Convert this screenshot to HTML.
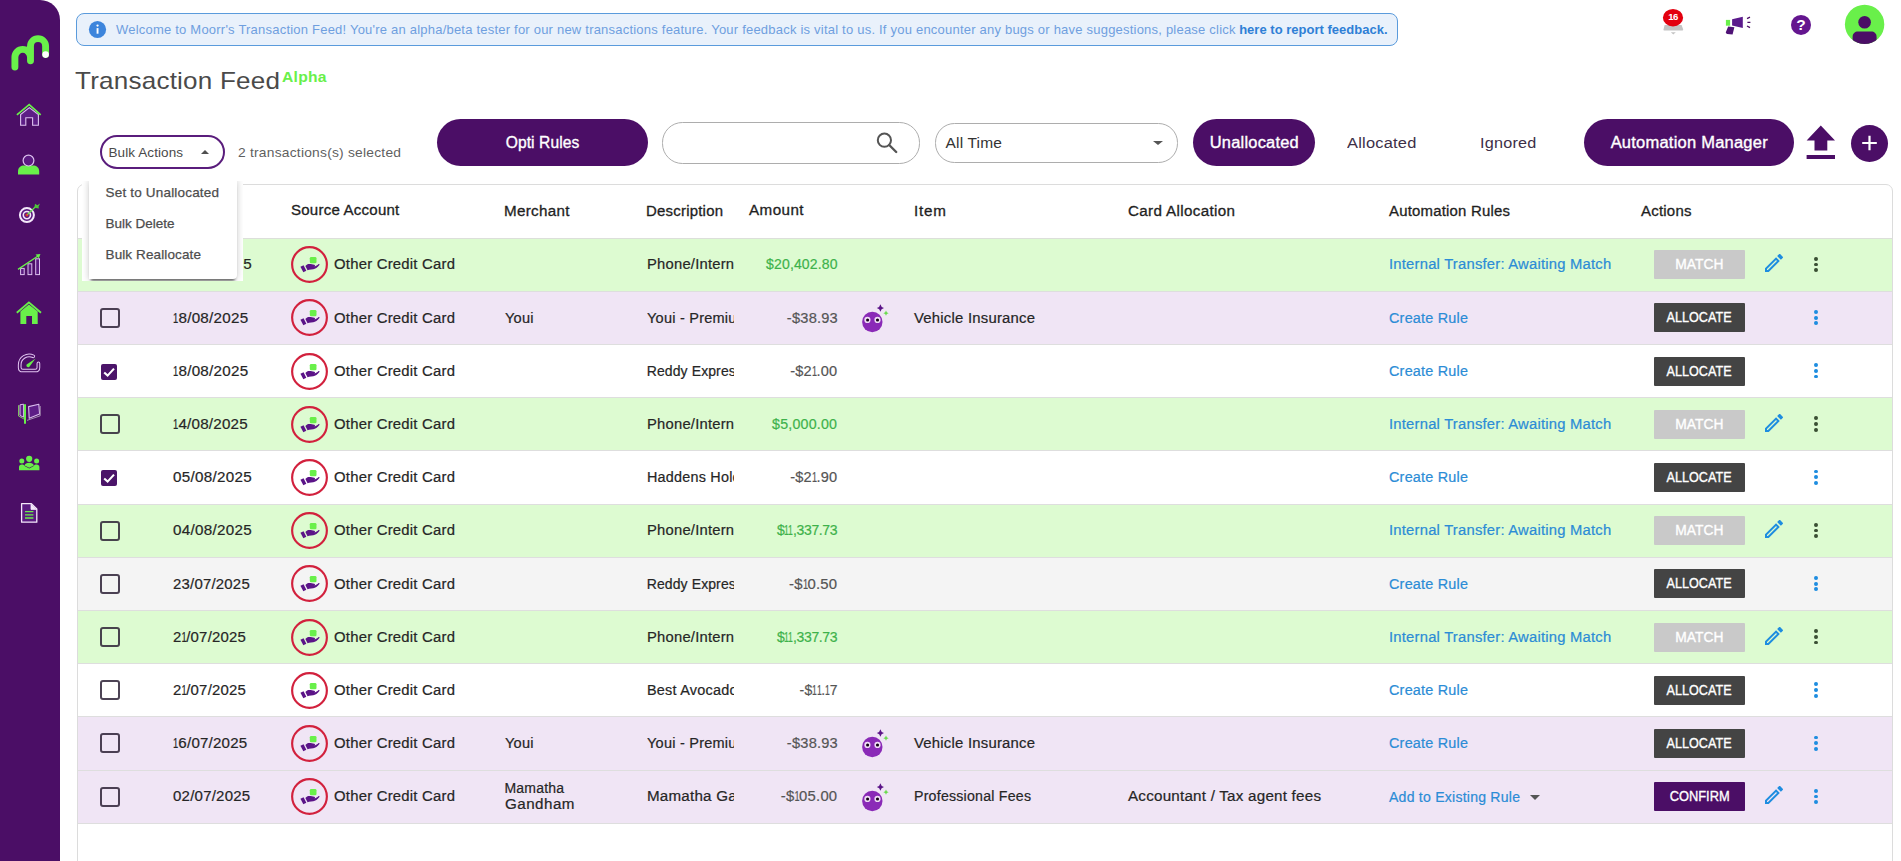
<!DOCTYPE html>
<html lang="en"><head>
<meta charset="utf-8">
<title>Transaction Feed</title>
<style>
*{box-sizing:border-box;margin:0;padding:0}
html,body{width:1901px;height:861px;overflow:hidden;background:#fff}
body{font-family:"Liberation Sans",sans-serif;color:#222;position:relative;font-size:14px}
.abs{position:absolute}
.fit{white-space:nowrap;display:inline-block}
/* sidebar */
#side{position:absolute;left:0;top:0;width:60px;height:861px;background:#4b0e66;border-top-right-radius:20px}
#side svg{position:absolute;left:0;top:0}
/* banner */
#banner{position:absolute;left:76px;top:13px;width:1322px;height:32.5px;border:1px solid #5a9bdc;border-radius:8px;background:#e9f1fb}
#banner .txt{position:absolute;left:39px;top:-0.4px;line-height:31px;font-size:13px;color:#6f9fdf;white-space:nowrap}
#banner .txt b{color:#2f7fd6;font-weight:700}
#title{position:absolute;left:75px;top:62.6px;font-size:24px;line-height:36px;color:#4a4a4a;white-space:nowrap}
#alpha{position:absolute;left:282px;top:66.7px;font-size:14.5px;line-height:20px;font-weight:700;color:#69f04a;white-space:nowrap}
/* toolbar */
#bulk{position:absolute;left:100px;top:134.5px;width:125px;height:34.5px;border:2px solid #5a1d7c;border-radius:17px;background:#fff}
#bulk .t{position:absolute;left:6.5px;top:0;line-height:31px;font-size:13.5px;color:#4a4a4a}
#bulk .a{position:absolute;left:99.3px;top:13.6px;width:0;height:0;border-left:4.8px solid transparent;border-right:4.8px solid transparent;border-bottom:4.6px solid #4f4f4f}
#selinfo{position:absolute;left:237.5px;top:142.5px;line-height:20px;font-size:13.5px;color:#5f5f5f}
.pill{position:absolute;top:118.5px;height:47.7px;border-radius:24px;background:#4b0e66;color:#fff;font-size:15.6px;text-align:center;line-height:48.2px;-webkit-text-stroke:0.35px #fff}
#search{position:absolute;left:662px;top:122.3px;width:257.7px;height:41.4px;border:1px solid #adadad;border-radius:20.4px;background:#fff}
#alltime{position:absolute;left:934.5px;top:123.2px;width:243.7px;height:39.5px;border:1px solid #adadad;border-radius:19.5px;background:#fff}
#alltime .t{position:absolute;left:10px;top:-0.6px;line-height:37px;font-size:15.5px;color:#333}
#alltime .a{position:absolute;left:217px;top:17.2px;width:0;height:0;border-left:5.1px solid transparent;border-right:5.1px solid transparent;border-top:4.9px solid #555}
.tab{position:absolute;top:132px;line-height:22px;font-size:15.5px;color:#3d2f48}
#plus{position:absolute;left:1851px;top:124.7px;width:37px;height:37px;border-radius:50%;background:#4b0e66}
/* table */
#tbl{position:absolute;left:77px;top:184px;width:1815.5px;height:700px;border:1px solid #dcdcdc;border-radius:7px 7px 0 0;background:#fff}
.th{position:absolute;font-size:14px;line-height:20px;color:#1f1f1f;-webkit-text-stroke:0.3px #1f1f1f;white-space:nowrap}
#hline{position:absolute;left:78px;top:238px;width:1814px;height:1px;background:#dcdfda}
.row{position:absolute;left:78px;width:1814px;height:53.2px;border-bottom:1.2px solid #dedede}
.bg-g{background:#ddfbd1}.bg-p{background:#f0e5f5}.bg-w{background:#fff}.bg-y{background:#f4f4f4}
.c{position:absolute;top:14.9px;-webkit-text-stroke:0.2px currentColor;line-height:22px;font-size:14px;color:#262626;white-space:nowrap}
.cb{position:absolute;left:22.4px;top:16.1px;width:20px;height:20px;border:2.2px solid rgba(38,26,48,.82);border-radius:3px}
.cb.on{left:23px;top:18.7px;width:16.2px;height:16.2px;border:0;background:#4b1469;border-radius:2px}
.cb.on svg{position:absolute;left:0;top:0}
.date{left:94.8px}
.o{font-style:normal;display:inline-block;width:4.7px;transform:scaleX(.62);transform-origin:0 50%;margin-left:-0.3px}.o.f{margin-left:0.3px}
.acct{position:absolute;left:213.2px;top:7.7px;width:37px;height:37px}
.acctname{left:256px}
.merch{left:426.5px}
.merch.two{top:9.5px;line-height:16px}
.desc{left:568.7px;width:87.7px;overflow:hidden}
.amt{right:1054.5px;color:#555}
.amt.pos{color:#3db24b}
.bot{position:absolute;left:782.1px;top:8px;width:34px;height:34px}
.item{left:836px}
.card{left:1049.5px}
.rule{left:1310.5px;color:#2b8cd6}
.caret{position:absolute;left:1451.9px;top:24.4px;width:0;height:0;border-left:5.3px solid transparent;border-right:5.3px solid transparent;border-top:5.3px solid #555}
.btn{position:absolute;left:1576px;top:11.5px;width:91px;height:29.2px;text-align:center;line-height:29.4px;font-size:14px;color:#fff;-webkit-text-stroke:0.35px #fff;border-radius:1px}
.b-match{background:#c9c9c9}.b-alloc{background:#444}.b-conf{background:#4b0e66}
.pen{position:absolute;left:1684px;top:12.6px;width:24px;height:24px}
.dots{position:absolute;left:1736.1px;top:18.3px;width:4px;height:16px}
.dots i{display:block;width:3.8px;height:3.8px;border-radius:50%;background:#1e8de0;margin:0 0 1.85px 0}
.dots.dk i{background:#3a4f33}
/* dropdown */
#ddu{position:absolute;left:82px;top:181px;width:161px;height:99.8px;background:#fff;overflow:hidden}
#dd{position:absolute;left:6.5px;top:0;width:148px;height:97.5px;background:#fff;border-radius:0 0 4px 0;box-shadow:0 4px 3px -2px rgba(0,0,0,.55),0 0 6px 1px rgba(0,0,0,.17)}
#dd span{position:absolute;left:17px;font-size:13.5px;line-height:20px;color:#4d4d4d;-webkit-text-stroke:0.25px #4d4d4d}
</style>
</head>
<body>

<div id="side">
<svg width="60" height="861" viewBox="0 0 60 861">
  <!-- logo -->
  <path d="M14.9 67 V57.2 A7.8 7.8 0 0 1 30.5 57.2 V60.8 M30.5 57.2 V46.2 A7.55 7.55 0 0 1 45.6 46.2 V54.5" fill="none" stroke="#69f04a" stroke-width="6.9" stroke-linecap="round" stroke-linejoin="round"></path>
  <circle cx="45.6" cy="54.6" r="3.3" fill="#fff"></circle>

  <!-- home outline -->
  <path d="M20.6 114.6 V125.2 H25.8 V117.8 H32.6 V125.2 H38.4 V114.6 L29.3 107.6 Z" fill="#5d1e86" stroke="#dcc0ee" stroke-width="1.1" stroke-linejoin="miter"></path>
  <path d="M16.9 114.9 L29.2 104.6 L40.7 114.9" fill="none" stroke="#69f04a" stroke-width="1.7"></path>
  <!-- person -->
  <path d="M18 174.6 V171.4 C18 167.6 21 165.6 24 165.6 H33.2 C36.2 165.6 39.2 167.6 39.2 171.4 V174.6 Z" fill="#69f04a"></path>
  <circle cx="28.5" cy="160.6" r="5.4" fill="#5a1a80" stroke="#dcc0ee" stroke-width="1.2"></circle>
  <!-- target -->
  <circle cx="26.9" cy="215.1" r="7" fill="#5a1a80" stroke="#f4e8fa" stroke-width="2"></circle>
  <circle cx="26.9" cy="215.1" r="3.6" fill="#5a1a80" stroke="#f4e8fa" stroke-width="1.6"></circle>
  <circle cx="26.9" cy="215.1" r="1.5" fill="#e5352b"></circle>
  <path d="M27.4 214.6 L36.6 205.6" stroke="#69f04a" stroke-width="1.3" fill="none"></path>
  <path d="M34.4 207.8 L35 203.8 L37.4 205.2 L40 203.6 L38.6 206.4 L38.8 208.4 Z" fill="#4fc43a"></path>
  <!-- bars -->
  <rect x="20.6" y="268.4" width="3.6" height="6.2" fill="#5a1a80" stroke="#dcc0ee" stroke-width="1"></rect>
  <rect x="28" y="263.8" width="3.8" height="10.8" fill="#5a1a80" stroke="#dcc0ee" stroke-width="1"></rect>
  <rect x="35.7" y="258.8" width="3.8" height="15.8" fill="#5a1a80" stroke="#dcc0ee" stroke-width="1"></rect>
  <path d="M18 269.4 L38 256" stroke="#69f04a" stroke-width="1.3" fill="none"></path>
  <path d="M35.6 254.6 L40.4 254 L38.8 258.6 Z" fill="#69f04a"></path>
  <!-- home green -->
  <path d="M20.4 311.4 L28.9 304.4 L37.7 311.4 V323.9 H32 V316 H26.3 V323.9 H20.4 Z" fill="#69f04a"></path>
  <path d="M16.8 312.7 L28.9 302.4 L41 312.7" fill="none" stroke="#69f04a" stroke-width="1.9"></path>
  <!-- gauge -->
  <path d="M33.3 356.3 A9.5 9.5 0 0 0 19.7 364.9 V367.4 Q19.7 370.5 22.8 370.5 H35.3 Q38.4 370.5 38.4 367.4 V363.4" fill="none" stroke="#e2c6f2" stroke-width="3.7" stroke-linecap="round"></path>
  <path d="M33.3 356.3 A9.5 9.5 0 0 0 19.7 364.9 V367.4 Q19.7 370.5 22.8 370.5 H35.3 Q38.4 370.5 38.4 367.4 V363.4" fill="none" stroke="#4b0e66" stroke-width="1.7" stroke-linecap="round"></path>
  <path d="M26.6 364.4 L35.6 358.4 L29.2 366.9 C28 368.2 25.6 366 26.6 364.4 Z" fill="#69f04a"></path>
  <!-- book -->
  <path d="M18.5 405.2 V416 L24 419" fill="none" stroke="#7fc060" stroke-width="1"></path>
  <path d="M20 404.8 L23.6 404.2 V417.2 L20 415.4 Z" fill="#5d1e86" stroke="#d9bcec" stroke-width="1"></path>
  <path d="M28.6 406.6 L38.8 404.2 L39.6 414 L29.2 418.2 Z" fill="#5d1e86" stroke="#d9bcec" stroke-width="1.1" stroke-linejoin="round"></path>
  <path d="M27 420.4 L40.2 415.8 V406" fill="none" stroke="#a48fb0" stroke-width="1"></path>
  <path d="M25 404.2 V423.8" stroke="#69f04a" stroke-width="2" fill="none"></path>
  <!-- group -->
  <circle cx="29.2" cy="458.8" r="3.1" fill="#69f04a"></circle><circle cx="21.8" cy="461" r="2.5" fill="#69f04a"></circle><circle cx="36.6" cy="461" r="2.5" fill="#69f04a"></circle>
  <path d="M19 470.2 V467 C19 465.2 20.2 464.4 21.8 464.4 C23.4 464.4 24.4 465 25 466.2 L29.2 468.6 L33.4 466.2 C34 465 35 464.4 36.6 464.4 C38.2 464.4 39.4 465.2 39.4 467 V470.2 Z" fill="#69f04a"></path>
  <path d="M24.6 465.4 C25 463.6 26.8 462.8 29.2 462.8 C31.6 462.8 33.4 463.6 33.8 465.4 L29.2 467.8 Z" fill="#69f04a"></path>
  <!-- doc -->
  <path d="M21.6 503.6 H31.4 L36.8 509 V522.2 H21.6 Z" fill="#5a1a80" stroke="#f4e8fa" stroke-width="1.3" stroke-linejoin="round"></path>
  <path d="M31 503.8 V509.4 H36.6" fill="#f4e8fa" stroke="#f4e8fa" stroke-width="0.8"></path>
  <path d="M25 511.6 H33.4 M25 514.8 H33.4 M25 518 H33.4" stroke="#69f04a" stroke-width="1.3" fill="none"></path>
</svg>
</div>

<div id="banner">
  <svg class="abs" style="left:10.5px;top:5.8px" width="19" height="19" viewBox="0 0 19 19"><circle cx="9.5" cy="9.5" r="8.6" fill="#3d85dc"></circle><rect x="8.6" y="8.1" width="1.9" height="5.6" fill="#fff"></rect><circle cx="9.55" cy="5.6" r="1.15" fill="#fff"></circle></svg>
  <span class="txt"><span class="fit" style="letter-spacing: 0.215px; margin-right: -0.215px;">Welcome to Moorr's Transaction Feed! You're an alpha/beta tester for our new transactions feature. Your feedback is vital to us. If you encounter any bugs or have suggestions, please click</span> <b class="fit" style="letter-spacing: 0.017px; margin-right: -0.017px;">here to report feedback.</b></span>
</div>

<div id="title"><span class="fit" style="letter-spacing: 0.204px; transform: scaleX(1.085); transform-origin: left center; margin-right: 15.856px;">Transaction Feed</span></div>
<div id="alpha"><span class="fit" style="letter-spacing: 0.203px; transform: scaleX(1.0829); transform-origin: left center; margin-right: 3.203px;">Alpha</span></div>

<div id="bulk"><span class="t fit" style="letter-spacing: 0.087px; margin-right: -0.087px;">Bulk Actions</span><span class="a"></span></div>
<div id="selinfo"><span class="fit" style="letter-spacing: 0.215px; transform: scaleX(1.0239); transform-origin: left center; margin-right: 3.585px;">2 transactions(s) selected</span></div>

<div class="pill" style="left:437.2px;width:210.6px"><span class="fit" style="letter-spacing: 0.076px; margin-right: -0.076px;">Opti Rules</span></div>
<div id="search"><svg class="abs" style="left:209.2px;top:4.3px" width="30" height="30" viewBox="0 0 30 30"><circle cx="12.4" cy="12.2" r="6.6" fill="none" stroke="#555" stroke-width="2"></circle><path d="M17.2 17 L24.2 24" stroke="#555" stroke-width="2.4" stroke-linecap="round"></path></svg></div>
<div id="alltime"><span class="t fit" style="letter-spacing: 0.196px; margin-right: -0.196px;">All Time</span><span class="a"></span></div>
<div class="pill" style="left:1193.3px;width:122px"><span class="fit" style="letter-spacing: 0.209px; transform: scaleX(1.0539); transform-origin: center center; margin-right: -0.209px;">Unallocated</span></div>
<div class="tab" style="left:1347.3px"><span class="fit" style="letter-spacing: 0.208px; transform: scaleX(1.0592); transform-origin: left center; margin-right: 3.665px;">Allocated</span></div>
<div class="tab" style="left:1480.3px"><span class="fit" style="letter-spacing: 0.21px; transform: scaleX(1.0457); transform-origin: left center; margin-right: 2.249px;">Ignored</span></div>
<div class="pill" style="left:1583.8px;width:210px"><span class="fit" style="letter-spacing: 0.208px; transform: scaleX(1.0587); transform-origin: center center; margin-right: -0.208px;">Automation Manager</span></div>
<svg class="abs" style="left:1804px;top:122px" width="34" height="40" viewBox="0 0 34 40"><path d="M16.8 3.4 L31 18.6 H23.3 V28.4 H10.5 V18.6 H2.6 Z" fill="#4b0e66"></path><rect x="2.6" y="33" width="28.4" height="4" fill="#4b0e66"></rect></svg>
<div id="plus"><svg width="37" height="37" viewBox="0 0 37 37"><path d="M18.5 10.7 V25.3 M11.2 18 H25.8" stroke="#fff" stroke-width="2.2"></path></svg></div>

<div id="tbl"></div>
<span class="th fit" style="left: 291px; top: 199.5px; letter-spacing: 0.205px; transform: scaleX(1.0752); transform-origin: left center; margin-right: 7.373px;">Source Account</span>
<span class="th fit" style="left: 504.3px; top: 200.5px; letter-spacing: 0.287px; transform: scaleX(1.085); transform-origin: left center; margin-right: 4.844px;">Merchant</span>
<span class="th fit" style="left: 646.3px; top: 200.5px; letter-spacing: 0.206px; transform: scaleX(1.0681); transform-origin: left center; margin-right: 4.703px;">Description</span>
<span class="th fit" style="left: 748.5px; top: 199.5px; letter-spacing: 0.396px; transform: scaleX(1.085); transform-origin: left center; margin-right: 3.874px;">Amount</span>
<span class="th fit" style="left: 914px; top: 200.5px; letter-spacing: 0.753px; transform: scaleX(1.085); transform-origin: left center; margin-right: 1.754px;">Item</span>
<span class="th fit" style="left: 1127.5px; top: 200.5px; letter-spacing: 0.318px; transform: scaleX(1.085); transform-origin: left center; margin-right: 8.065px;">Card Allocation</span>
<span class="th fit" style="left: 1388.8px; top: 200.5px; letter-spacing: 0.207px; transform: scaleX(1.065); transform-origin: left center; margin-right: 7.179px;">Automation Rules</span>
<span class="th fit" style="left: 1640.5px; top: 200.5px; letter-spacing: 0.205px; transform: scaleX(1.0709); transform-origin: left center; margin-right: 3.14px;">Actions</span>
<div id="hline"></div>
<div class="row bg-g" style="top:238.6px"><span class="cb"></span><span class="c date fit" style="letter-spacing: 0.283px; transform: scaleX(1.085); transform-origin: left center; margin-right: 5.89px;">20/08/2025</span><span class="acct"><svg width="37" height="37" viewBox="0 0 36 36"><circle cx="18" cy="18" r="16.9" fill="none" stroke="#d2213d" stroke-width="2.1"></circle>
  <rect x="18.3" y="10.6" width="6.5" height="6.3" rx="1.4" fill="#69f04a"></rect>
  <path d="M9.2 20.1 L12.2 18.7 L14.9 24 L12 25.6 Z" fill="#5b1488"></path>
  <path d="M14 19.4 C15.2 17.6 17.3 17.1 19.2 17.6 L22.6 18.2 C23.7 18.4 23.6 19.7 22.6 19.8 L23.6 19.7 C24.8 19.4 26 18.4 26.8 17.6 C27.6 17.2 28.1 18 27.4 18.8 C25.8 20.9 23.8 22.3 21.6 22.7 L17.6 23 L16.1 23.7 Z" fill="#5b1488"></path></svg></span><span class="fit c acctname" style="letter-spacing: 0.207px; transform: scaleX(1.0633); transform-origin: left center; margin-right: 6.998px;">Other Credit Card</span><span class="c desc"><span class="fit" style="letter-spacing: 0.208px; transform: scaleX(1.056); transform-origin: left center; margin-right: -0.208px;">Phone/Internet</span></span><span class="c amt pos"><span class="fit" style="letter-spacing: 0.147px; margin-right: -0.147px;">$20,402.80</span></span><span class="fit c rule" style="letter-spacing: 0.208px; transform: scaleX(1.0566); transform-origin: left center; margin-right: 11.704px;">Internal Transfer: Awaiting Match</span><span class="btn b-match"><span class="fit" style="transform: scaleX(0.9849);">MATCH</span></span><span class="pen"><svg width="24" height="24" viewBox="0 0 24 24"><path d="M14.06 9.02l.92.92L5.92 19H5v-.92l9.06-9.06M17.66 3c-.25 0-.51.1-.7.29l-1.83 1.83 3.75 3.75 1.83-1.83c.39-.39.39-1.02 0-1.41l-2.34-2.34c-.2-.2-.45-.29-.71-.29zm-3.6 3.19L3 17.25V21h3.75L17.81 9.94l-3.75-3.75z" fill="#1e8de0"></path></svg></span><span class="dots dk"><i></i><i></i><i></i></span></div>
<div class="row bg-p" style="top:291.8px"><span class="cb"></span><span class="c date fit" style="letter-spacing: 0.253px; transform: scaleX(1.085); transform-origin: left center; margin-right: 5.638px;"><i class="o f">1</i>8/08/2025</span><span class="acct"><svg width="37" height="37" viewBox="0 0 36 36"><circle cx="18" cy="18" r="16.9" fill="none" stroke="#d2213d" stroke-width="2.1"></circle>
  <rect x="18.3" y="10.6" width="6.5" height="6.3" rx="1.4" fill="#69f04a"></rect>
  <path d="M9.2 20.1 L12.2 18.7 L14.9 24 L12 25.6 Z" fill="#5b1488"></path>
  <path d="M14 19.4 C15.2 17.6 17.3 17.1 19.2 17.6 L22.6 18.2 C23.7 18.4 23.6 19.7 22.6 19.8 L23.6 19.7 C24.8 19.4 26 18.4 26.8 17.6 C27.6 17.2 28.1 18 27.4 18.8 C25.8 20.9 23.8 22.3 21.6 22.7 L17.6 23 L16.1 23.7 Z" fill="#5b1488"></path></svg></span><span class="fit c acctname" style="letter-spacing: 0.207px; transform: scaleX(1.0633); transform-origin: left center; margin-right: 6.998px;">Other Credit Card</span><span class="fit c merch" style="letter-spacing: 0.211px; transform: scaleX(1.0407); transform-origin: left center; margin-right: 0.904px;">Youi</span><span class="c desc"><span class="fit" style="letter-spacing: 0.212px; transform: scaleX(1.0384); transform-origin: left center; margin-right: -0.212px;">Youi - Premium</span></span><span class="c amt"><span class="fit" style="letter-spacing: 0.211px; transform: scaleX(1.0441); transform-origin: right center; margin-right: -0.211px;">-$38.93</span></span><span class="bot"><svg width="34" height="34" viewBox="0 0 34 34"><circle cx="12.3" cy="22" r="10.2" fill="#8a2ab7"></circle>
  <circle cx="7.4" cy="19.9" r="3.1" fill="#f0dcf6"></circle><circle cx="17.5" cy="19.9" r="3.1" fill="#f0dcf6"></circle>
  <circle cx="7.6" cy="20" r="1.55" fill="#120616"></circle><circle cx="17.5" cy="20" r="1.55" fill="#120616"></circle>
  <path d="M20.4 4.3 Q21 7.4 24 8 Q21 8.6 20.4 11.7 Q19.8 8.6 16.8 8 Q19.8 7.4 20.4 4.3Z" fill="#5b1488"></path>
  <path d="M26 10.6 Q26.4 12.8 28.6 13.2 Q26.4 13.6 26 15.8 Q25.6 13.6 23.4 13.2 Q25.6 12.8 26 10.6Z" fill="#6bdc4f"></path></svg></span><span class="fit c item" style="letter-spacing: 0.207px; transform: scaleX(1.0629); transform-origin: left center; margin-right: 6.95px;">Vehicle Insurance</span><span class="fit c rule" style="letter-spacing: 0.214px; transform: scaleX(1.0281); transform-origin: left center; margin-right: 1.943px;">Create Rule</span><span class="btn b-alloc"><span class="fit" style="transform: scaleX(0.9014);">ALLOCATE</span></span><span class="dots"><i></i><i></i><i></i></span></div>
<div class="row bg-w" style="top:345.0px"><span class="cb on"><svg viewBox="0 0 16 16" width="16" height="16"><path d="M3.2 8.4 L6.6 11.6 L13 4.6" fill="none" stroke="#fff" stroke-width="2.1"></path></svg></span><span class="c date fit" style="letter-spacing: 0.253px; transform: scaleX(1.085); transform-origin: left center; margin-right: 5.638px;"><i class="o f">1</i>8/08/2025</span><span class="acct"><svg width="37" height="37" viewBox="0 0 36 36"><circle cx="18" cy="18" r="16.9" fill="none" stroke="#d2213d" stroke-width="2.1"></circle>
  <rect x="18.3" y="10.6" width="6.5" height="6.3" rx="1.4" fill="#69f04a"></rect>
  <path d="M9.2 20.1 L12.2 18.7 L14.9 24 L12 25.6 Z" fill="#5b1488"></path>
  <path d="M14 19.4 C15.2 17.6 17.3 17.1 19.2 17.6 L22.6 18.2 C23.7 18.4 23.6 19.7 22.6 19.8 L23.6 19.7 C24.8 19.4 26 18.4 26.8 17.6 C27.6 17.2 28.1 18 27.4 18.8 C25.8 20.9 23.8 22.3 21.6 22.7 L17.6 23 L16.1 23.7 Z" fill="#5b1488"></path></svg></span><span class="fit c acctname" style="letter-spacing: 0.207px; transform: scaleX(1.0633); transform-origin: left center; margin-right: 6.998px;">Other Credit Card</span><span class="c desc"><span class="fit" style="letter-spacing: 0.106px; margin-right: -0.106px;">Reddy Express</span></span><span class="c amt"><span class="fit" style="letter-spacing: 0.211px; transform: scaleX(1.041); transform-origin: right center; margin-right: -0.211px;">-$2<i class="o">1</i>.00</span></span><span class="fit c rule" style="letter-spacing: 0.214px; transform: scaleX(1.0281); transform-origin: left center; margin-right: 1.943px;">Create Rule</span><span class="btn b-alloc"><span class="fit" style="transform: scaleX(0.9014);">ALLOCATE</span></span><span class="dots"><i></i><i></i><i></i></span></div>
<div class="row bg-g" style="top:398.2px"><span class="cb"></span><span class="c date fit" style="letter-spacing: 0.203px; transform: scaleX(1.0841); transform-origin: left center; margin-right: 5.592px;"><i class="o f">1</i>4/08/2025</span><span class="acct"><svg width="37" height="37" viewBox="0 0 36 36"><circle cx="18" cy="18" r="16.9" fill="none" stroke="#d2213d" stroke-width="2.1"></circle>
  <rect x="18.3" y="10.6" width="6.5" height="6.3" rx="1.4" fill="#69f04a"></rect>
  <path d="M9.2 20.1 L12.2 18.7 L14.9 24 L12 25.6 Z" fill="#5b1488"></path>
  <path d="M14 19.4 C15.2 17.6 17.3 17.1 19.2 17.6 L22.6 18.2 C23.7 18.4 23.6 19.7 22.6 19.8 L23.6 19.7 C24.8 19.4 26 18.4 26.8 17.6 C27.6 17.2 28.1 18 27.4 18.8 C25.8 20.9 23.8 22.3 21.6 22.7 L17.6 23 L16.1 23.7 Z" fill="#5b1488"></path></svg></span><span class="fit c acctname" style="letter-spacing: 0.207px; transform: scaleX(1.0633); transform-origin: left center; margin-right: 6.998px;">Other Credit Card</span><span class="c desc"><span class="fit" style="letter-spacing: 0.208px; transform: scaleX(1.056); transform-origin: left center; margin-right: -0.208px;">Phone/Internet</span></span><span class="c amt pos"><span class="fit" style="letter-spacing: 0.217px; transform: scaleX(1.0151); transform-origin: right center; margin-right: -0.217px;">$5,000.00</span></span><span class="fit c rule" style="letter-spacing: 0.208px; transform: scaleX(1.0566); transform-origin: left center; margin-right: 11.704px;">Internal Transfer: Awaiting Match</span><span class="btn b-match"><span class="fit" style="transform: scaleX(0.9849);">MATCH</span></span><span class="pen"><svg width="24" height="24" viewBox="0 0 24 24"><path d="M14.06 9.02l.92.92L5.92 19H5v-.92l9.06-9.06M17.66 3c-.25 0-.51.1-.7.29l-1.83 1.83 3.75 3.75 1.83-1.83c.39-.39.39-1.02 0-1.41l-2.34-2.34c-.2-.2-.45-.29-.71-.29zm-3.6 3.19L3 17.25V21h3.75L17.81 9.94l-3.75-3.75z" fill="#1e8de0"></path></svg></span><span class="dots dk"><i></i><i></i><i></i></span></div>
<div class="row bg-w" style="top:451.4px"><span class="cb on"><svg viewBox="0 0 16 16" width="16" height="16"><path d="M3.2 8.4 L6.6 11.6 L13 4.6" fill="none" stroke="#fff" stroke-width="2.1"></path></svg></span><span class="c date fit" style="letter-spacing: 0.283px; transform: scaleX(1.085); transform-origin: left center; margin-right: 5.89px;">05/08/2025</span><span class="acct"><svg width="37" height="37" viewBox="0 0 36 36"><circle cx="18" cy="18" r="16.9" fill="none" stroke="#d2213d" stroke-width="2.1"></circle>
  <rect x="18.3" y="10.6" width="6.5" height="6.3" rx="1.4" fill="#69f04a"></rect>
  <path d="M9.2 20.1 L12.2 18.7 L14.9 24 L12 25.6 Z" fill="#5b1488"></path>
  <path d="M14 19.4 C15.2 17.6 17.3 17.1 19.2 17.6 L22.6 18.2 C23.7 18.4 23.6 19.7 22.6 19.8 L23.6 19.7 C24.8 19.4 26 18.4 26.8 17.6 C27.6 17.2 28.1 18 27.4 18.8 C25.8 20.9 23.8 22.3 21.6 22.7 L17.6 23 L16.1 23.7 Z" fill="#5b1488"></path></svg></span><span class="fit c acctname" style="letter-spacing: 0.207px; transform: scaleX(1.0633); transform-origin: left center; margin-right: 6.998px;">Other Credit Card</span><span class="c desc"><span class="fit" style="letter-spacing: 0.214px; transform: scaleX(1.0277); transform-origin: left center; margin-right: -0.214px;">Haddens Holdings</span></span><span class="c amt"><span class="fit" style="letter-spacing: 0.211px; transform: scaleX(1.041); transform-origin: right center; margin-right: -0.211px;">-$2<i class="o">1</i>.90</span></span><span class="fit c rule" style="letter-spacing: 0.214px; transform: scaleX(1.0281); transform-origin: left center; margin-right: 1.943px;">Create Rule</span><span class="btn b-alloc"><span class="fit" style="transform: scaleX(0.9014);">ALLOCATE</span></span><span class="dots"><i></i><i></i><i></i></span></div>
<div class="row bg-g" style="top:504.6px"><span class="cb"></span><span class="c date fit" style="letter-spacing: 0.283px; transform: scaleX(1.085); transform-origin: left center; margin-right: 5.89px;">04/08/2025</span><span class="acct"><svg width="37" height="37" viewBox="0 0 36 36"><circle cx="18" cy="18" r="16.9" fill="none" stroke="#d2213d" stroke-width="2.1"></circle>
  <rect x="18.3" y="10.6" width="6.5" height="6.3" rx="1.4" fill="#69f04a"></rect>
  <path d="M9.2 20.1 L12.2 18.7 L14.9 24 L12 25.6 Z" fill="#5b1488"></path>
  <path d="M14 19.4 C15.2 17.6 17.3 17.1 19.2 17.6 L22.6 18.2 C23.7 18.4 23.6 19.7 22.6 19.8 L23.6 19.7 C24.8 19.4 26 18.4 26.8 17.6 C27.6 17.2 28.1 18 27.4 18.8 C25.8 20.9 23.8 22.3 21.6 22.7 L17.6 23 L16.1 23.7 Z" fill="#5b1488"></path></svg></span><span class="fit c acctname" style="letter-spacing: 0.207px; transform: scaleX(1.0633); transform-origin: left center; margin-right: 6.998px;">Other Credit Card</span><span class="c desc"><span class="fit" style="letter-spacing: 0.208px; transform: scaleX(1.056); transform-origin: left center; margin-right: -0.208px;">Phone/Internet</span></span><span class="c amt pos"><span class="fit" style="letter-spacing: -0.385px; margin-right: 0.385px;">$<i class="o">1</i><i class="o">1</i>,337.73</span></span><span class="fit c rule" style="letter-spacing: 0.208px; transform: scaleX(1.0566); transform-origin: left center; margin-right: 11.704px;">Internal Transfer: Awaiting Match</span><span class="btn b-match"><span class="fit" style="transform: scaleX(0.9849);">MATCH</span></span><span class="pen"><svg width="24" height="24" viewBox="0 0 24 24"><path d="M14.06 9.02l.92.92L5.92 19H5v-.92l9.06-9.06M17.66 3c-.25 0-.51.1-.7.29l-1.83 1.83 3.75 3.75 1.83-1.83c.39-.39.39-1.02 0-1.41l-2.34-2.34c-.2-.2-.45-.29-.71-.29zm-3.6 3.19L3 17.25V21h3.75L17.81 9.94l-3.75-3.75z" fill="#1e8de0"></path></svg></span><span class="dots dk"><i></i><i></i><i></i></span></div>
<div class="row bg-y" style="top:557.8px"><span class="cb"></span><span class="c date fit" style="letter-spacing: 0.206px; transform: scaleX(1.0662); transform-origin: left center; margin-right: 4.559px;">23/07/2025</span><span class="acct"><svg width="37" height="37" viewBox="0 0 36 36"><circle cx="18" cy="18" r="16.9" fill="none" stroke="#d2213d" stroke-width="2.1"></circle>
  <rect x="18.3" y="10.6" width="6.5" height="6.3" rx="1.4" fill="#69f04a"></rect>
  <path d="M9.2 20.1 L12.2 18.7 L14.9 24 L12 25.6 Z" fill="#5b1488"></path>
  <path d="M14 19.4 C15.2 17.6 17.3 17.1 19.2 17.6 L22.6 18.2 C23.7 18.4 23.6 19.7 22.6 19.8 L23.6 19.7 C24.8 19.4 26 18.4 26.8 17.6 C27.6 17.2 28.1 18 27.4 18.8 C25.8 20.9 23.8 22.3 21.6 22.7 L17.6 23 L16.1 23.7 Z" fill="#5b1488"></path></svg></span><span class="fit c acctname" style="letter-spacing: 0.207px; transform: scaleX(1.0633); transform-origin: left center; margin-right: 6.998px;">Other Credit Card</span><span class="c desc"><span class="fit" style="letter-spacing: 0.106px; margin-right: -0.106px;">Reddy Express</span></span><span class="c amt"><span class="fit" style="letter-spacing: 0.207px; transform: scaleX(1.0636); transform-origin: right center; margin-right: -0.207px;">-$<i class="o">1</i>0.50</span></span><span class="fit c rule" style="letter-spacing: 0.214px; transform: scaleX(1.0281); transform-origin: left center; margin-right: 1.943px;">Create Rule</span><span class="btn b-alloc"><span class="fit" style="transform: scaleX(0.9014);">ALLOCATE</span></span><span class="dots"><i></i><i></i><i></i></span></div>
<div class="row bg-g" style="top:611.0px"><span class="cb"></span><span class="c date fit" style="letter-spacing: 0.206px; transform: scaleX(1.0668); transform-origin: left center; margin-right: 4.356px;">2<i class="o">1</i>/07/2025</span><span class="acct"><svg width="37" height="37" viewBox="0 0 36 36"><circle cx="18" cy="18" r="16.9" fill="none" stroke="#d2213d" stroke-width="2.1"></circle>
  <rect x="18.3" y="10.6" width="6.5" height="6.3" rx="1.4" fill="#69f04a"></rect>
  <path d="M9.2 20.1 L12.2 18.7 L14.9 24 L12 25.6 Z" fill="#5b1488"></path>
  <path d="M14 19.4 C15.2 17.6 17.3 17.1 19.2 17.6 L22.6 18.2 C23.7 18.4 23.6 19.7 22.6 19.8 L23.6 19.7 C24.8 19.4 26 18.4 26.8 17.6 C27.6 17.2 28.1 18 27.4 18.8 C25.8 20.9 23.8 22.3 21.6 22.7 L17.6 23 L16.1 23.7 Z" fill="#5b1488"></path></svg></span><span class="fit c acctname" style="letter-spacing: 0.207px; transform: scaleX(1.0633); transform-origin: left center; margin-right: 6.998px;">Other Credit Card</span><span class="c desc"><span class="fit" style="letter-spacing: 0.208px; transform: scaleX(1.056); transform-origin: left center; margin-right: -0.208px;">Phone/Internet</span></span><span class="c amt pos"><span class="fit" style="letter-spacing: -0.385px; margin-right: 0.385px;">$<i class="o">1</i><i class="o">1</i>,337.73</span></span><span class="fit c rule" style="letter-spacing: 0.208px; transform: scaleX(1.0566); transform-origin: left center; margin-right: 11.704px;">Internal Transfer: Awaiting Match</span><span class="btn b-match"><span class="fit" style="transform: scaleX(0.9849);">MATCH</span></span><span class="pen"><svg width="24" height="24" viewBox="0 0 24 24"><path d="M14.06 9.02l.92.92L5.92 19H5v-.92l9.06-9.06M17.66 3c-.25 0-.51.1-.7.29l-1.83 1.83 3.75 3.75 1.83-1.83c.39-.39.39-1.02 0-1.41l-2.34-2.34c-.2-.2-.45-.29-.71-.29zm-3.6 3.19L3 17.25V21h3.75L17.81 9.94l-3.75-3.75z" fill="#1e8de0"></path></svg></span><span class="dots dk"><i></i><i></i><i></i></span></div>
<div class="row bg-w" style="top:664.2px"><span class="cb"></span><span class="c date fit" style="letter-spacing: 0.206px; transform: scaleX(1.0668); transform-origin: left center; margin-right: 4.356px;">2<i class="o">1</i>/07/2025</span><span class="acct"><svg width="37" height="37" viewBox="0 0 36 36"><circle cx="18" cy="18" r="16.9" fill="none" stroke="#d2213d" stroke-width="2.1"></circle>
  <rect x="18.3" y="10.6" width="6.5" height="6.3" rx="1.4" fill="#69f04a"></rect>
  <path d="M9.2 20.1 L12.2 18.7 L14.9 24 L12 25.6 Z" fill="#5b1488"></path>
  <path d="M14 19.4 C15.2 17.6 17.3 17.1 19.2 17.6 L22.6 18.2 C23.7 18.4 23.6 19.7 22.6 19.8 L23.6 19.7 C24.8 19.4 26 18.4 26.8 17.6 C27.6 17.2 28.1 18 27.4 18.8 C25.8 20.9 23.8 22.3 21.6 22.7 L17.6 23 L16.1 23.7 Z" fill="#5b1488"></path></svg></span><span class="fit c acctname" style="letter-spacing: 0.207px; transform: scaleX(1.0633); transform-origin: left center; margin-right: 6.998px;">Other Credit Card</span><span class="c desc"><span class="fit" style="letter-spacing: 0.213px; transform: scaleX(1.0322); transform-origin: left center; margin-right: -0.213px;">Best Avocado</span></span><span class="c amt"><span class="fit" style="letter-spacing: 0.196px; margin-right: -0.196px;">-$<i class="o">1</i><i class="o">1</i>.<i class="o">1</i>7</span></span><span class="fit c rule" style="letter-spacing: 0.214px; transform: scaleX(1.0281); transform-origin: left center; margin-right: 1.943px;">Create Rule</span><span class="btn b-alloc"><span class="fit" style="transform: scaleX(0.9014);">ALLOCATE</span></span><span class="dots"><i></i><i></i><i></i></span></div>
<div class="row bg-p" style="top:717.4px"><span class="cb"></span><span class="c date fit" style="letter-spacing: 0.204px; transform: scaleX(1.0767); transform-origin: left center; margin-right: 5.08px;"><i class="o f">1</i>6/07/2025</span><span class="acct"><svg width="37" height="37" viewBox="0 0 36 36"><circle cx="18" cy="18" r="16.9" fill="none" stroke="#d2213d" stroke-width="2.1"></circle>
  <rect x="18.3" y="10.6" width="6.5" height="6.3" rx="1.4" fill="#69f04a"></rect>
  <path d="M9.2 20.1 L12.2 18.7 L14.9 24 L12 25.6 Z" fill="#5b1488"></path>
  <path d="M14 19.4 C15.2 17.6 17.3 17.1 19.2 17.6 L22.6 18.2 C23.7 18.4 23.6 19.7 22.6 19.8 L23.6 19.7 C24.8 19.4 26 18.4 26.8 17.6 C27.6 17.2 28.1 18 27.4 18.8 C25.8 20.9 23.8 22.3 21.6 22.7 L17.6 23 L16.1 23.7 Z" fill="#5b1488"></path></svg></span><span class="fit c acctname" style="letter-spacing: 0.207px; transform: scaleX(1.0633); transform-origin: left center; margin-right: 6.998px;">Other Credit Card</span><span class="fit c merch" style="letter-spacing: 0.211px; transform: scaleX(1.0407); transform-origin: left center; margin-right: 0.904px;">Youi</span><span class="c desc"><span class="fit" style="letter-spacing: 0.212px; transform: scaleX(1.0384); transform-origin: left center; margin-right: -0.212px;">Youi - Premium</span></span><span class="c amt"><span class="fit" style="letter-spacing: 0.211px; transform: scaleX(1.0441); transform-origin: right center; margin-right: -0.211px;">-$38.93</span></span><span class="bot"><svg width="34" height="34" viewBox="0 0 34 34"><circle cx="12.3" cy="22" r="10.2" fill="#8a2ab7"></circle>
  <circle cx="7.4" cy="19.9" r="3.1" fill="#f0dcf6"></circle><circle cx="17.5" cy="19.9" r="3.1" fill="#f0dcf6"></circle>
  <circle cx="7.6" cy="20" r="1.55" fill="#120616"></circle><circle cx="17.5" cy="20" r="1.55" fill="#120616"></circle>
  <path d="M20.4 4.3 Q21 7.4 24 8 Q21 8.6 20.4 11.7 Q19.8 8.6 16.8 8 Q19.8 7.4 20.4 4.3Z" fill="#5b1488"></path>
  <path d="M26 10.6 Q26.4 12.8 28.6 13.2 Q26.4 13.6 26 15.8 Q25.6 13.6 23.4 13.2 Q25.6 12.8 26 10.6Z" fill="#6bdc4f"></path></svg></span><span class="fit c item" style="letter-spacing: 0.207px; transform: scaleX(1.0629); transform-origin: left center; margin-right: 6.95px;">Vehicle Insurance</span><span class="fit c rule" style="letter-spacing: 0.214px; transform: scaleX(1.0281); transform-origin: left center; margin-right: 1.943px;">Create Rule</span><span class="btn b-alloc"><span class="fit" style="transform: scaleX(0.9014);">ALLOCATE</span></span><span class="dots"><i></i><i></i><i></i></span></div>
<div class="row bg-p" style="top:770.6px"><span class="cb"></span><span class="c date fit" style="letter-spacing: 0.205px; transform: scaleX(1.0734); transform-origin: left center; margin-right: 5.072px;">02/07/2025</span><span class="acct"><svg width="37" height="37" viewBox="0 0 36 36"><circle cx="18" cy="18" r="16.9" fill="none" stroke="#d2213d" stroke-width="2.1"></circle>
  <rect x="18.3" y="10.6" width="6.5" height="6.3" rx="1.4" fill="#69f04a"></rect>
  <path d="M9.2 20.1 L12.2 18.7 L14.9 24 L12 25.6 Z" fill="#5b1488"></path>
  <path d="M14 19.4 C15.2 17.6 17.3 17.1 19.2 17.6 L22.6 18.2 C23.7 18.4 23.6 19.7 22.6 19.8 L23.6 19.7 C24.8 19.4 26 18.4 26.8 17.6 C27.6 17.2 28.1 18 27.4 18.8 C25.8 20.9 23.8 22.3 21.6 22.7 L17.6 23 L16.1 23.7 Z" fill="#5b1488"></path></svg></span><span class="fit c acctname" style="letter-spacing: 0.207px; transform: scaleX(1.0633); transform-origin: left center; margin-right: 6.998px;">Other Credit Card</span><span class="c merch two"><span class="fit" style="letter-spacing: 0.19px; margin-right: -0.19px;">Mamatha</span><br><span class="fit" style="letter-spacing: 0.428px; transform: scaleX(1.085); transform-origin: left center; margin-right: 5.016px;">Gandham</span></span><span class="c desc"><span class="fit" style="letter-spacing: 0.203px; transform: scaleX(1.0831); transform-origin: left center; margin-right: -0.203px;">Mamatha Gandham</span></span><span class="c amt"><span class="fit" style="letter-spacing: 0.208px; transform: scaleX(1.0595); transform-origin: right center; margin-right: -0.208px;">-$<i class="o">1</i>05.00</span></span><span class="bot"><svg width="34" height="34" viewBox="0 0 34 34"><circle cx="12.3" cy="22" r="10.2" fill="#8a2ab7"></circle>
  <circle cx="7.4" cy="19.9" r="3.1" fill="#f0dcf6"></circle><circle cx="17.5" cy="19.9" r="3.1" fill="#f0dcf6"></circle>
  <circle cx="7.6" cy="20" r="1.55" fill="#120616"></circle><circle cx="17.5" cy="20" r="1.55" fill="#120616"></circle>
  <path d="M20.4 4.3 Q21 7.4 24 8 Q21 8.6 20.4 11.7 Q19.8 8.6 16.8 8 Q19.8 7.4 20.4 4.3Z" fill="#5b1488"></path>
  <path d="M26 10.6 Q26.4 12.8 28.6 13.2 Q26.4 13.6 26 15.8 Q25.6 13.6 23.4 13.2 Q25.6 12.8 26 10.6Z" fill="#6bdc4f"></path></svg></span><span class="fit c item" style="letter-spacing: 0.217px; transform: scaleX(1.0126); transform-origin: left center; margin-right: 1.244px;">Professional Fees</span><span class="fit c card" style="letter-spacing: 0.206px; transform: scaleX(1.085); transform-origin: left center; margin-right: 14.914px;">Accountant / Tax agent fees</span><span class="fit c rule" style="top: 15.8px; letter-spacing: 0.219px; transform: scaleX(1.0059); transform-origin: left center; margin-right: 0.548px;">Add to Existing Rule</span><span class="caret"></span><span class="btn b-conf"><span class="fit" style="transform: scaleX(0.9184);">CONFIRM</span></span><span class="pen"><svg width="24" height="24" viewBox="0 0 24 24"><path d="M14.06 9.02l.92.92L5.92 19H5v-.92l9.06-9.06M17.66 3c-.25 0-.51.1-.7.29l-1.83 1.83 3.75 3.75 1.83-1.83c.39-.39.39-1.02 0-1.41l-2.34-2.34c-.2-.2-.45-.29-.71-.29zm-3.6 3.19L3 17.25V21h3.75L17.81 9.94l-3.75-3.75z" fill="#1e8de0"></path></svg></span><span class="dots"><i></i><i></i><i></i></span></div>

<div id="ddu"><div id="dd">
  <span class="fit" style="top: 1.5px; letter-spacing: 0.187px; margin-right: -0.187px;">Set to Unallocated</span>
  <span class="fit" style="top: 32.8px; letter-spacing: -0.005px; margin-right: 0.005px;">Bulk Delete</span>
  <span class="fit" style="top: 64px; letter-spacing: 0.121px; margin-right: -0.121px;">Bulk Reallocate</span>
</div></div>

<!-- top right icons -->
<svg class="abs" style="left:1655px;top:4px" width="40" height="36" viewBox="0 0 40 36">
  <path d="M9.6 21 H26.6 L28.2 25.4 Q28.3 26.4 27.3 26.4 H9.2 Q8.2 26.4 8.5 25.4 Z" fill="#c4c4c4"></path><path d="M15.8 28.2 H20.8 L18.3 30.4Z" fill="#c4c4c4"></path>
  <ellipse cx="18" cy="13.7" rx="10.1" ry="8.7" fill="#e3000f"></ellipse>
  <text x="17.9" y="16.1" font-family="Liberation Sans, sans-serif" font-size="9.6" font-weight="700" fill="#fff" text-anchor="middle" letter-spacing="-0.7">16</text>
</svg>
<svg class="abs" style="left:1720px;top:10px" width="36" height="30" viewBox="0 0 36 30">
  <rect x="5.9" y="9.9" width="4.2" height="5.8" fill="#69f04a"></rect>
  <path d="M12.1 9.2 L22.8 6.8 V18 L12.1 15.5 Z" fill="#5b1a8c"></path>
  <path d="M8.2 16.4 L14.4 17.3 L12.6 24.6 L7.2 23.9 C5.9 23.7 5.6 22.8 6 21.8 Z" fill="#4f1276"></path>
  <path d="M27 8.6 L30 7.2 M27.4 12.4 H30.4 M27 16 L30 17.6" stroke="#4b0e66" stroke-width="1.3" fill="none"></path>
</svg>
<svg class="abs" style="left:1790px;top:14px" width="22" height="22" viewBox="0 0 22 22"><circle cx="11" cy="10.9" r="10" fill="#64168f"></circle><text x="11" y="16.2" font-family="Liberation Sans, sans-serif" font-weight="700" font-size="15.5" fill="#fff" text-anchor="middle">?</text></svg>
<svg class="abs" style="left:1844px;top:4px" width="42" height="42" viewBox="0 0 42 42">
  <defs><clipPath id="avc"><circle cx="20.6" cy="20.4" r="19.7"></circle></clipPath></defs>
  <circle cx="20.6" cy="20.4" r="19.7" fill="#69f04a"></circle>
  <g clip-path="url(#avc)"><circle cx="20.6" cy="18.2" r="6.3" fill="#4b0e66"></circle><path d="M8.6 42 V33 C8.6 29.6 11 27.6 14 27.6 H27.2 C30.2 27.6 32.6 29.6 32.6 33 V42 Z" fill="#4b0e66"></path></g>
</svg>


</body></html>
